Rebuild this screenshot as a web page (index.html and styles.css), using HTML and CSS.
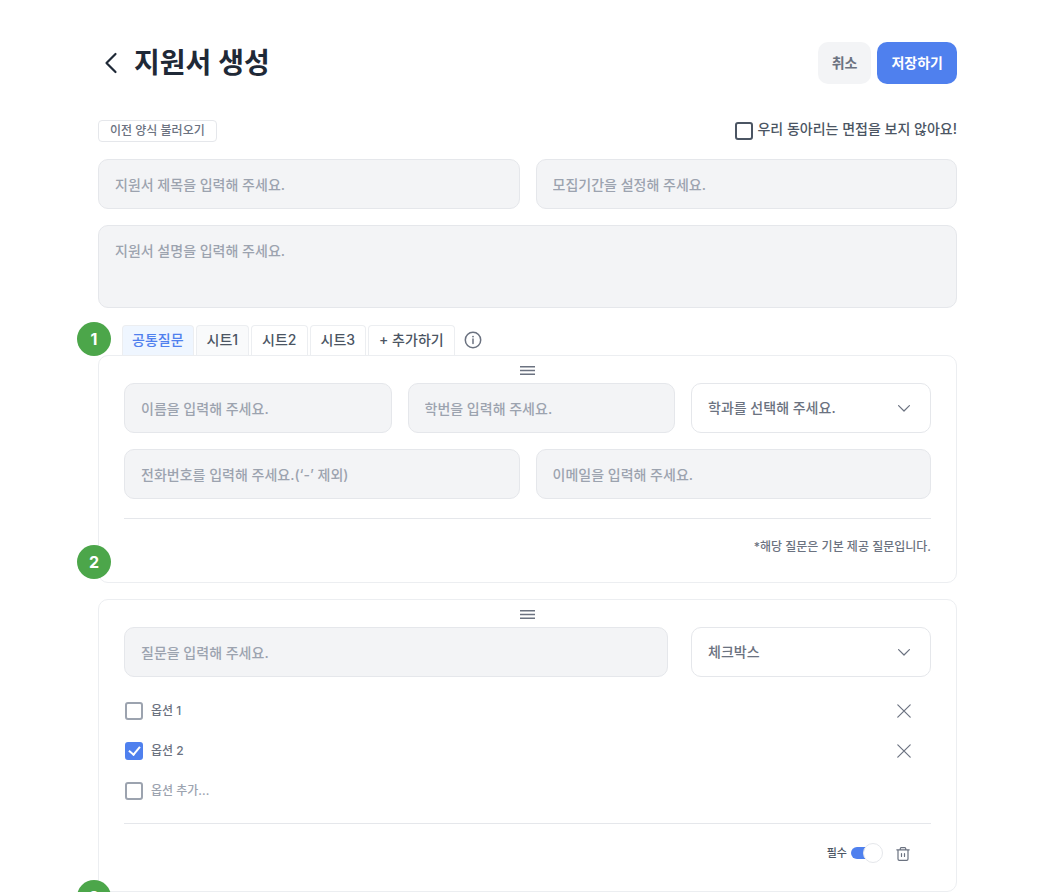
FILE: index.html
```
<!DOCTYPE html>
<html lang="ko">
<head>
<meta charset="UTF-8">
<meta name="viewport" content="width=device-width, initial-scale=1.0">
<title>지원서 생성</title>
<link rel="stylesheet" href="styles.css">
</head>
<body>
<main class="page">
	<header class="header">
		<button type="button" class="icon-btn back" aria-label="뒤로">
			<svg width="14" height="22" viewBox="0 0 14 22"><path d="M11.5 2L2.5 11L11.5 20" fill="none" stroke="currentColor" stroke-width="2.2" stroke-linecap="round" stroke-linejoin="round"/></svg>
		</button>
		<h1>지원서 생성</h1>
		<button type="button" class="btn btn-cancel">취소</button>
		<button type="submit" form="apply" class="btn btn-save">저장하기</button>
	</header>

	<form id="apply" onsubmit="return(false);">
		<div class="toolbar">
			<button type="button" class="btn-load">이전 양식 불러오기</button>
			<label class="no-interview"><input type="checkbox" class="check check-dark"><span>우리 동아리는 면접을 보지 않아요!</span></label>
		</div>
		<div class="row halves">
			<input type="text" class="field" aria-label="지원서 제목" placeholder="지원서 제목을 입력해 주세요.">
			<input type="text" class="field" aria-label="모집기간" placeholder="모집기간을 설정해 주세요.">
		</div>
		<textarea class="field desc" aria-label="지원서 설명" placeholder="지원서 설명을 입력해 주세요."></textarea>

		<div class="tabs">
			<span class="step step-tabs">1</span>
			<button type="button" class="tab active">공통질문</button>
			<button type="button" class="tab hover">시트1</button>
			<button type="button" class="tab">시트2</button>
			<button type="button" class="tab">시트3</button>
			<button type="button" class="tab">+ 추가하기</button>
			<button type="button" class="icon-btn info" aria-label="안내">
				<svg width="18" height="18" viewBox="0 0 18 18"><circle cx="9" cy="9" r="7.7" fill="none" stroke="currentColor" stroke-width="1.5"/><path d="M9 8v4.6" stroke="currentColor" stroke-width="1.5" stroke-linecap="round"/><circle cx="9" cy="5.6" r=".9" fill="currentColor"/></svg>
			</button>
		</div>

		<!-- basic questions -->
		<section class="card">
			<div class="handle"><svg width="15" height="9" viewBox="0 0 15 9"><path d="M0 .7h15M0 4.5h15M0 8.3h15" stroke="currentColor" stroke-width="1.4"/></svg></div>
			<div class="row basic">
				<input type="text" class="field" aria-label="이름" placeholder="이름을 입력해 주세요.">
				<input type="text" class="field" aria-label="학번" placeholder="학번을 입력해 주세요.">
				<div class="select">
					<select aria-label="학과"><option>학과를 선택해 주세요.</option></select>
					<svg width="12" height="7" viewBox="0 0 12 7"><path d="M.6 .6L6 6L11.4 .6" fill="none" stroke="currentColor" stroke-width="1.2" stroke-linecap="round" stroke-linejoin="round"/></svg>
				</div>
			</div>
			<div class="row halves">
				<input type="tel" class="field" aria-label="전화번호" placeholder="전화번호를 입력해 주세요.(‘-’ 제외)">
				<input type="email" class="field" aria-label="이메일" placeholder="이메일을 입력해 주세요.">
			</div>
			<div class="card-foot">
				<p class="note">*해당 질문은 기본 제공 질문입니다.</p>
			</div>
			<span class="step step-basic">2</span>
		</section>

		<!-- checkbox question -->
		<section class="card">
			<div class="handle"><svg width="15" height="9" viewBox="0 0 15 9"><path d="M0 .7h15M0 4.5h15M0 8.3h15" stroke="currentColor" stroke-width="1.4"/></svg></div>
			<div class="row question">
				<input type="text" class="field" aria-label="질문" placeholder="질문을 입력해 주세요.">
				<div class="select">
					<select aria-label="질문 유형"><option>체크박스</option></select>
					<svg width="12" height="7" viewBox="0 0 12 7"><path d="M.6 .6L6 6L11.4 .6" fill="none" stroke="currentColor" stroke-width="1.2" stroke-linecap="round" stroke-linejoin="round"/></svg>
				</div>
			</div>
			<ul class="options">
				<li>
					<label><input type="checkbox" class="check">옵션 1</label>
					<button type="button" class="icon-btn" aria-label="옵션 1 삭제"><svg width="14" height="14" viewBox="0 0 14 14"><path d="M.8 .8L13.2 13.2M13.2 .8L.8 13.2" stroke="currentColor" stroke-width="1.2" stroke-linecap="round"/></svg></button>
				</li>
				<li>
					<label><input type="checkbox" class="check" checked>옵션 2</label>
					<button type="button" class="icon-btn" aria-label="옵션 2 삭제"><svg width="14" height="14" viewBox="0 0 14 14"><path d="M.8 .8L13.2 13.2M13.2 .8L.8 13.2" stroke="currentColor" stroke-width="1.2" stroke-linecap="round"/></svg></button>
				</li>
				<li>
					<input type="checkbox" class="check" aria-label="새 옵션">
					<input type="text" class="option-new" aria-label="옵션 추가" placeholder="옵션 추가...">
				</li>
			</ul>
			<div class="card-foot">
				<label class="required">필수<input type="checkbox" class="switch" checked></label>
				<button type="button" class="icon-btn" aria-label="질문 삭제">
					<svg width="14" height="14" viewBox="0 0 14 14" fill="none" stroke="currentColor" stroke-width="1.2" stroke-linecap="round" stroke-linejoin="round"><path d="M.8 2.8h12.4M4.3 2.6V1.6q0-.9.9-.9h3.6q.9 0 .9.9v1M2 3v9q0 1.3 1.3 1.3h7.4q1.3 0 1.3-1.3V3M5.5 6.6v2.8M8.5 6.6v2.8"/></svg>
				</button>
			</div>
			<span class="step step-question">3</span>
		</section>
	</form>
</main>
</body>
</html>
```

FILE: styles.css
```
* {
	box-sizing: border-box;
}
body {
	margin: 0;
	background: #fff;
	color: #6b7280;
}
body, button, input, select, textarea {
	font-family: Inter, "Noto Sans CJK KR", sans-serif;
	font-size: 14px;
	font-weight: 500;
	line-height: 20px;
}
button {
	padding: 0;
	border: 0;
	background: none;
	color: inherit;
	cursor: pointer;
}
.page {
	padding: 42px 95px 0 98px;
	overflow: hidden;
}
.icon-btn {
	display: flex;
	flex: none;
}

/* header */
.header {
	display: flex;
	align-items: center;
	gap: 6px;
	height: 42px;
}
.back {
	margin: 0 10px 0 6px;
	color: #1f2937;
}
h1 {
	flex: 1;
	margin: 0;
	color: #1f2937;
	font-size: 28px;
	font-weight: 600;
	line-height: 40px;
}
.btn {
	height: 42px;
	padding: 0 14px;
	border-radius: 10px;
	font-weight: 600;
}
.btn-cancel {
	background: #f3f4f6;
}
.btn-save {
	background: #4f80ee;
	color: #fff;
}

.toolbar {
	display: flex;
	justify-content: space-between;
	align-items: center;
	height: 22px;
	margin: 36px 0 17px;
}
.btn-load {
	height: 22px;
	padding: 0 11px;
	border: 1px solid #e5e7eb;
	border-radius: 4px;
	font-size: 12px;
}
.no-interview {
	display: flex;
	gap: 4px;
	height: 24px;
	color: #4b5563;
}

/* fields */
.row {
	display: grid;
	gap: 16px;
	margin-bottom: 16px;
}
.halves {
	grid-template-columns: 1fr 1fr;
}
.basic {
	grid-template-columns: 1fr 1fr 240px;
}
.question {
	grid-template-columns: 1fr 240px;
	column-gap: 23px;
}
.field, .select select {
	display: block;
	width: 100%;
	min-width: 0;
	height: 50px;
	padding: 0 16px;
	border: 1px solid #e5e7eb;
	border-radius: 10px;
	background: #f3f4f6;
	color: #6b7280;
}
::placeholder {
	color: #9ca3af;
	opacity: 1;
}
.desc {
	height: 83px;
	padding: 15px 16px;
	resize: none;
}
.select {
	position: relative;
}
.select select {
	appearance: none;
	background: #fff;
}
.select svg {
	position: absolute;
	top: 22px;
	right: 21px;
	pointer-events: none;
}
.check {
	display: grid;
	place-items: center;
	flex: none;
	appearance: none;
	width: 18px;
	height: 18px;
	margin: 0;
	border: 2px solid #9ca3af;
	border-radius: 3px;
}
.check-dark {
	margin-top: 3px;
	border-color: #4b5563;
}
.check:checked {
	border-color: #4f80ee;
	background: #4f80ee;
}
.check:checked::after {
	content: "";
	width: 9px;
	height: 5px;
	margin-bottom: 3px;
	border: solid #fff;
	border-width: 0 0 2px 2px;
	transform: rotate(-50deg);
}

/* tabs */
.tabs {
	position: relative;
	display: flex;
	gap: 2px;
	height: 30px;
	margin-top: 17px;
	padding-left: 24px;
}
.tab {
	padding: 0 10px 2px;
	border: 1px solid #eceef1;
	border-bottom: 0;
	border-radius: 4px 4px 0 0;
	color: #4b5563;
}
.tab.hover {
	background: #f9fafb;
}
.tab.active {
	padding: 0 9px 2px;
	background: #eff6ff;
	color: #4f80ee;
}
.info {
	align-self: center;
	margin-left: 7px;
}

/* question cards */
.card {
	position: relative;
	padding: 0 25px;
	border: 1px solid #eceef1;
	border-radius: 10px;
}
.card + .card {
	margin-top: 16px;
}
.handle {
	display: flex;
	justify-content: center;
	padding: 10px 0 8px;
}
.card-foot {
	display: flex;
	justify-content: flex-end;
	align-items: flex-start;
	height: 64px;
	margin-top: 19px;
	padding-top: 18px;
	border-top: 1px solid #e5e7eb;
}
.note {
	margin: 0;
	font-size: 12px;
}
.options {
	margin: 17px 0 0;
	padding: 0 20px 0 1px;
	list-style: none;
	font-size: 12px;
}
.options li {
	display: flex;
	justify-content: space-between;
	align-items: center;
	gap: 8px;
	height: 34px;
	margin-bottom: 6px;
}
.options label {
	display: flex;
	align-items: center;
	gap: 8px;
}
.option-new {
	flex: 1;
	min-width: 0;
	padding: 0;
	border: 0;
	background: none;
	font-size: 12px;
}
.card-foot .icon-btn {
	margin: 4px 21px 0 15px;
}
.options + .card-foot {
	margin-top: 15px;
	height: 68px;
	padding-top: 19px;
}
.required {
	display: flex;
	align-items: center;
	gap: 4px;
	color: #4b5563;
	font-size: 11px;
}
.switch {
	display: flex;
	align-items: center;
	appearance: none;
	width: 30px;
	height: 18px;
	margin: 0;
}
.switch::before {
	content: "";
	flex: none;
	width: 24px;
	height: 12px;
	border-radius: 6px;
	background: #d1d5db;
}
.switch:checked::before {
	background: #4f80ee;
}
.switch::after {
	content: "";
	flex: none;
	width: 18px;
	height: 18px;
	margin-left: -24px;
	border: 1px solid #e5e7eb;
	border-radius: 50%;
	background: #fff;
}
.switch:checked::after {
	margin-left: -12px;
}

/* numbered badges hanging over the left edge */
.step {
	position: absolute;
	left: -22px;
	display: grid;
	place-items: center;
	width: 34px;
	height: 34px;
	border-radius: 50%;
	background: #4ca64a;
	color: #fff;
	font-size: 16px;
	font-weight: 700;
}
.step-tabs {
	top: -3px;
	left: -21px;
	z-index: 1;
}
.step-basic {
	bottom: 3px;
}
.step-question {
	bottom: -23px;
}
```
